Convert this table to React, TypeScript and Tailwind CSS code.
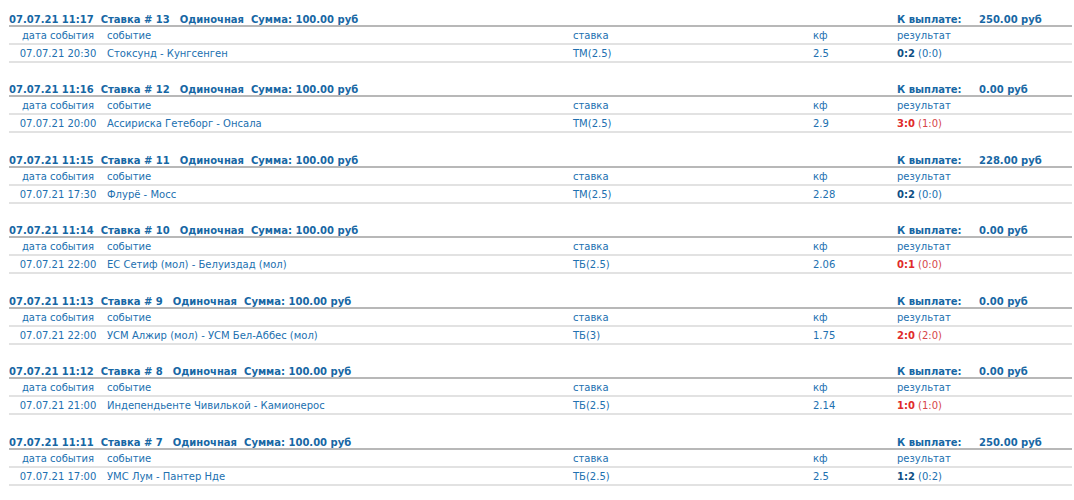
import React from 'react';

type Bet = {
  placed: string;
  num: number;
  amount: string;
  payout: string;
  date: string;
  event: string;
  stake: string;
  kf: string;
  score: string;
  half: string;
  won: boolean;
};

const BETS: Bet[] = [
  { placed: '07.07.21 11:17', num: 13, amount: '100.00', payout: '250.00', date: '07.07.21 20:30', event: 'Стоксунд - Кунгсенген', stake: 'ТМ(2.5)', kf: '2.5', score: '0:2', half: '(0:0)', won: true },
  { placed: '07.07.21 11:16', num: 12, amount: '100.00', payout: '0.00', date: '07.07.21 20:00', event: 'Ассириска Гетеборг - Онсала', stake: 'ТМ(2.5)', kf: '2.9', score: '3:0', half: '(1:0)', won: false },
  { placed: '07.07.21 11:15', num: 11, amount: '100.00', payout: '228.00', date: '07.07.21 17:30', event: 'Флурё - Мосс', stake: 'ТМ(2.5)', kf: '2.28', score: '0:2', half: '(0:0)', won: true },
  { placed: '07.07.21 11:14', num: 10, amount: '100.00', payout: '0.00', date: '07.07.21 22:00', event: 'ЕС Сетиф (мол) - Белуиздад (мол)', stake: 'ТБ(2.5)', kf: '2.06', score: '0:1', half: '(0:0)', won: false },
  { placed: '07.07.21 11:13', num: 9, amount: '100.00', payout: '0.00', date: '07.07.21 22:00', event: 'УСМ Алжир (мол) - УСМ Бел-Аббес (мол)', stake: 'ТБ(3)', kf: '1.75', score: '2:0', half: '(2:0)', won: false },
  { placed: '07.07.21 11:12', num: 8, amount: '100.00', payout: '0.00', date: '07.07.21 21:00', event: 'Индепендьенте Чивилькой - Камионерос', stake: 'ТБ(2.5)', kf: '2.14', score: '1:0', half: '(1:0)', won: false },
  { placed: '07.07.21 11:11', num: 7, amount: '100.00', payout: '250.00', date: '07.07.21 17:00', event: 'УМС Лум - Пантер Нде', stake: 'ТБ(2.5)', kf: '2.5', score: '1:2', half: '(0:2)', won: true },
];

function BetBlock({ bet, idx }: { bet: Bet; idx: number }) {
  return (
    <div className={`ml-[9px] mr-[2px] ${idx % 2 === 0 ? 'mb-[19px]' : 'mb-[20px]'}`}>
      {/* header */}
      <div className="flex h-[15px] items-end border-b-2 border-[#b8b8b8] font-bold text-[#1767a4] leading-[11px]">
        <div className="flex w-[888px] gap-[7px]">
          <span>{bet.placed}</span>
          <span className="mr-[3px]">Ставка # {bet.num}</span>
          <span>Одиночная</span>
          <span>Сумма: {bet.amount} руб</span>
        </div>
        <span className="w-[82px]">К выплате:</span>
        <span>{bet.payout} руб</span>
      </div>

      {/* column titles */}
      <div className="flex h-[18px] items-center border-b-2 border-[#e2e2e2]">
        <span className="w-[98px] text-center">дата события</span>
        <span className="w-[466px]">событие</span>
        <span className="w-[240px]">ставка</span>
        <span className="w-[84px]">кф</span>
        <span>результат</span>
      </div>

      {/* event row */}
      <div className="flex h-[18px] items-center border-b-2 border-[#e2e2e2]">
        <span className="w-[98px] text-center">{bet.date}</span>
        <span className="w-[466px]">{bet.event}</span>
        <span className="w-[240px]">{bet.stake}</span>
        <span className="w-[84px]">{bet.kf}</span>
        {bet.won ? (
          <span>
            <b className="text-[#0f4f84]">{bet.score}</b> {bet.half}
          </span>
        ) : (
          <span className="text-[#d6454a]">
            <b className="text-[#e02b2b]">{bet.score}</b> {bet.half}
          </span>
        )}
      </div>
    </div>
  );
}

export default function App() {
  return (
    <div className="min-h-[500px] w-[1074px] bg-white pt-[12px] text-[10px] text-[#2170b0] font-['DejaVu_Sans',sans-serif]">
      {BETS.map((b, i) => (
        <BetBlock key={b.num} bet={b} idx={i} />
      ))}
    </div>
  );
}
